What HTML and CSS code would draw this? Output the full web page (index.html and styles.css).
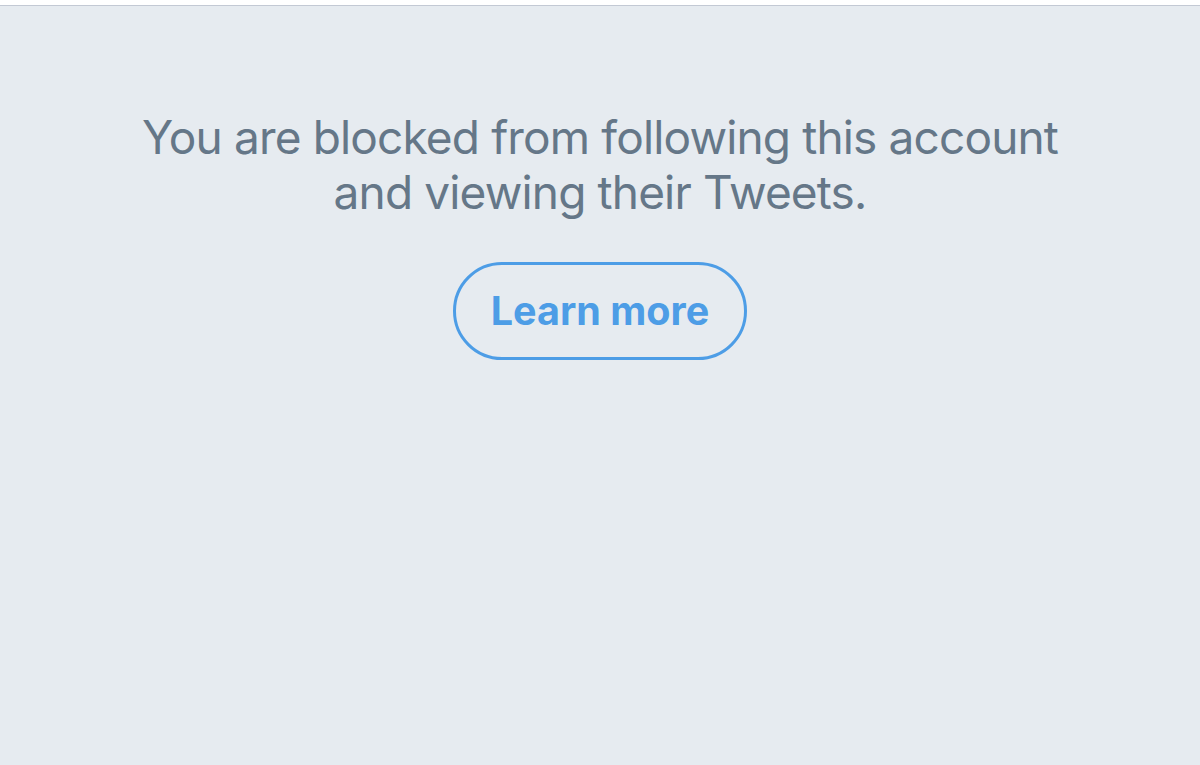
FILE: index.html
```html
<!DOCTYPE html>
<html>
<head>
<meta charset="utf-8">
<link rel="stylesheet" href="styles.css">
</head>
<body>
<div class="topbar"></div>
<main class="panel">
  <p class="message">You are blocked from following this account<br>and viewing their Tweets.</p>
  <a class="learn" href="#">Learn more</a>
</main>
</body>
</html>
```
FILE: styles.css
```css
html, body {
  margin: 0;
  padding: 0;
  height: 100%;
}
body {
  background: #e6ebf0;
  font-family: Inter, "Noto Sans", sans-serif;
  display: flex;
  flex-direction: column;
}
.topbar {
  height: 5px;
  background: #ffffff;
  border-bottom: 1px solid #c3c9d4;
  flex: none;
}
.panel {
  flex: 1;
  display: flex;
  flex-direction: column;
  align-items: center;
  padding-top: 104px;
}
.message {
  margin: 0;
  color: #657788;
  font-size: 46px;
  line-height: 55px;
  text-align: center;
  letter-spacing: -0.85px;
}
.learn {
  margin-top: 42px;
  box-sizing: border-box;
  width: 294px;
  height: 98px;
  border: 3px solid #4d9de6;
  border-radius: 49px;
  color: #4d9de6;
  font-weight: 700;
  font-size: 39.5px;
  display: flex;
  align-items: center;
  justify-content: center;
  text-decoration: none;
}
```
